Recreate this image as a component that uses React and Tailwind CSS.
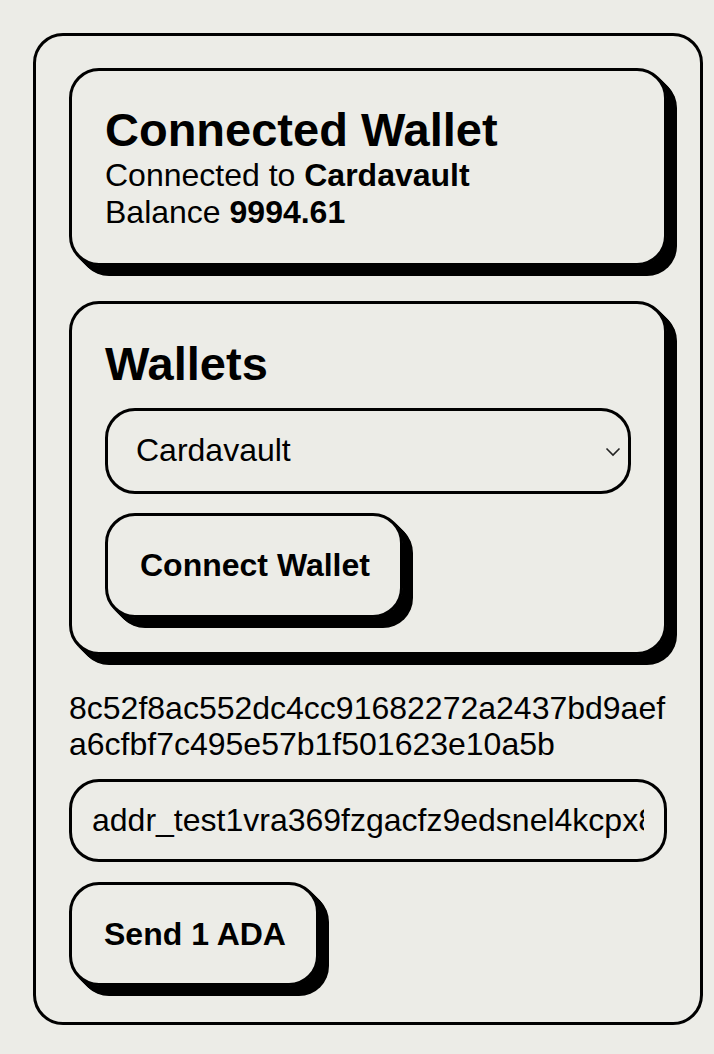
import { useState } from "react";

const SHADOW =
  "shadow-[1px_1px_0_#000,2px_2px_0_#000,3px_3px_0_#000,4px_4px_0_#000,5px_5px_0_#000,6px_6px_0_#000,7px_7px_0_#000,8px_8px_0_#000,9px_9px_0_#000,10px_10px_0_#000]";

export default function App() {
  const [wallet, setWallet] = useState("cardavault");
  const [address, setAddress] = useState(
    "addr_test1vra369fzgacfz9edsnel4kcpx8xdfnvqkqcd5pwtpl8rqglqs6pvqy"
  );

  return (
    <div className="min-h-screen bg-[#ecece7] text-black font-['Liberation_Sans',Arial,Helvetica,sans-serif] leading-[1.15]">
      <div className="pt-[33px] pl-[33px]">
        <main className="w-[670px] rounded-[30px] border-[3px] border-black pt-8 pb-[36px] px-[33px] flex flex-col">
          {/* Connected wallet card */}
          <section className={`rounded-[30px] border-[3px] border-black py-8 px-[33px] ${SHADOW}`}>
            <h1 className="text-[47px] font-bold leading-[1.15]">Connected Wallet</h1>
            <p className="text-[32px]">
              Connected to <b>Cardavault</b>
            </p>
            <p className="text-[32px]">
              Balance <b>9994.61</b>
            </p>
          </section>

          {/* Wallet picker */}
          <section
            className={`mt-[35px] rounded-[30px] border-[3px] border-black pt-[33px] pb-[34px] px-[33px] flex flex-col ${SHADOW}`}
          >
            <h2 className="text-[47px] font-bold leading-[1.15]">Wallets</h2>
            <div className="relative mt-[17px]">
              <select
                value={wallet}
                onChange={(e) => setWallet(e.target.value)}
                className="w-full h-[86px] appearance-none bg-transparent rounded-[30px] border-[3px] border-black pl-7 pr-12 text-[32px] outline-none"
              >
                <option value="cardavault">Cardavault</option>
                <option value="nami">Nami</option>
                <option value="eternl">Eternl</option>
              </select>
              <svg
                className="pointer-events-none absolute right-[10px] top-[39px]"
                width="16"
                height="10"
                viewBox="0 0 16 10"
                fill="none"
              >
                <path d="M1.5 1.5 L8 8 L14.5 1.5" stroke="#222" strokeWidth="1.6" />
              </svg>
            </div>
            <button
              className={`mt-[19px] self-start h-[105px] pl-8 pr-[30px] rounded-[30px] border-[3px] border-black text-[32px] font-bold ${SHADOW}`}
            >
              Connect Wallet
            </button>
          </section>

          <p className="mt-[35px] text-[32px] break-all">
            8c52f8ac552dc4cc91682272a2437bd9aefa6cfbf7c495e57b1f501623e10a5b
          </p>

          <input
            value={address}
            onChange={(e) => setAddress(e.target.value)}
            className="mt-4 h-[83px] w-full bg-transparent rounded-[30px] border-[3px] border-black px-5 text-[32px] outline-none"
          />

          <button
            className={`mt-5 self-start h-[104px] pl-8 pr-[30px] rounded-[30px] border-[3px] border-black text-[32px] font-bold ${SHADOW}`}
          >
            Send 1 ADA
          </button>
        </main>
      </div>
    </div>
  );
}
